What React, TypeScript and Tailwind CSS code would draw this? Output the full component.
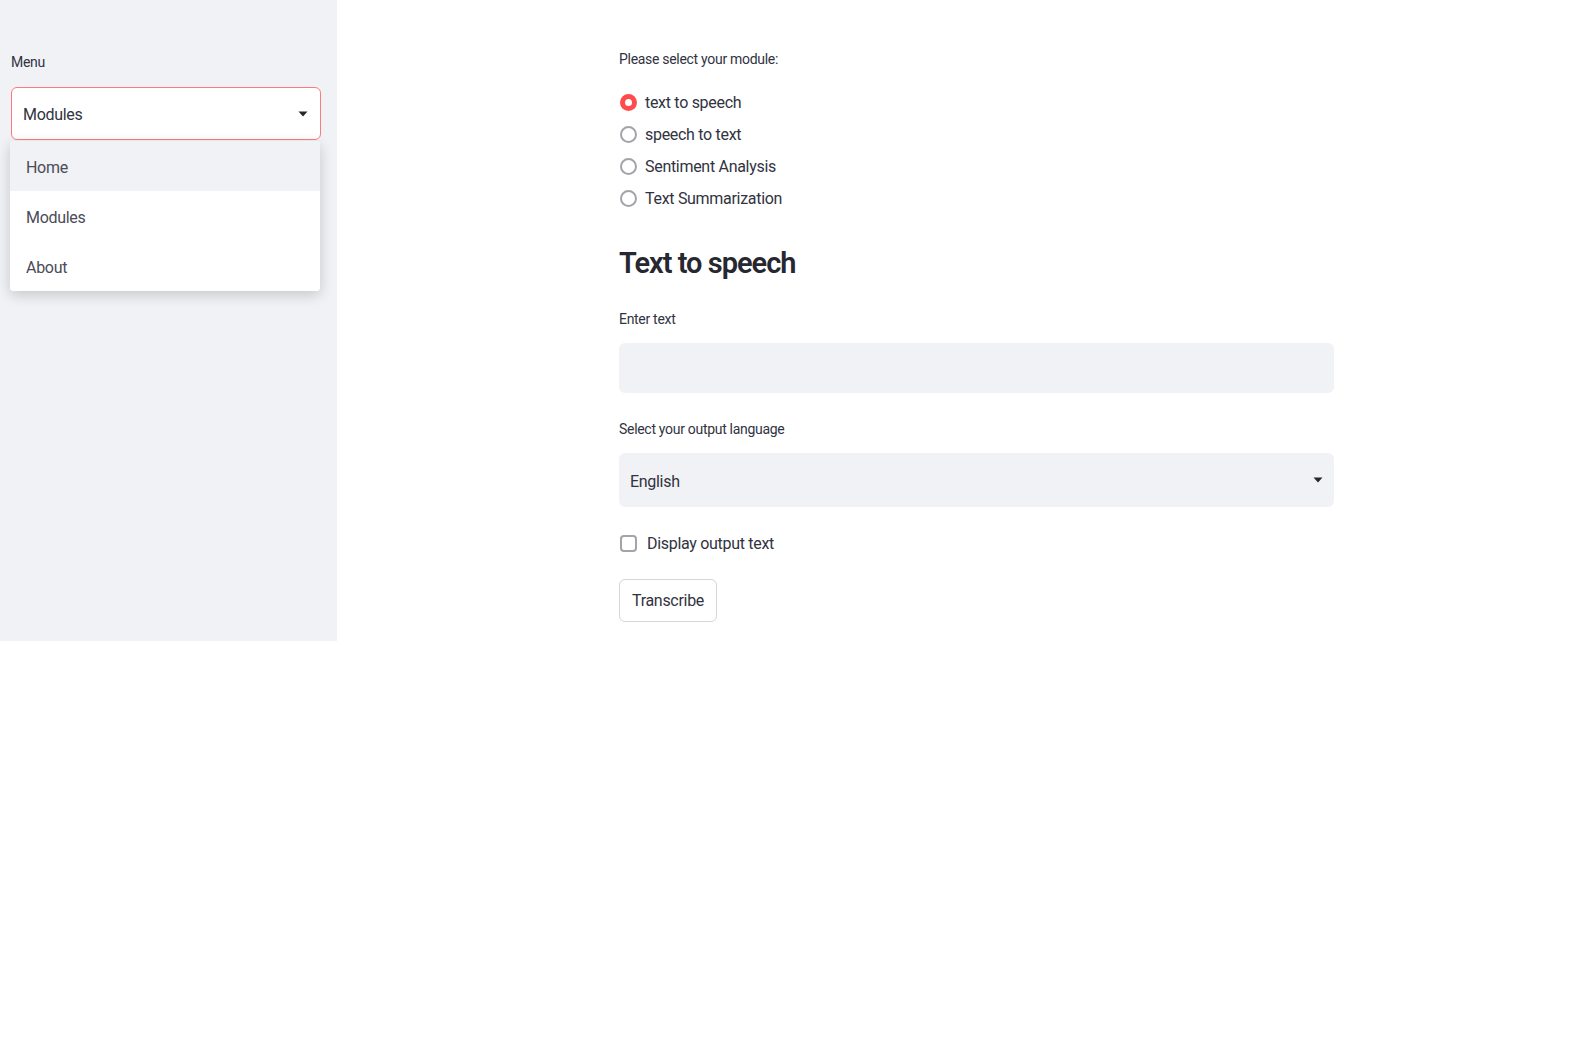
import { useState } from 'react';

const MODULES = ['text to speech', 'speech to text', 'Sentiment Analysis', 'Text Summarization'];
const MENU = ['Home', 'Modules', 'About'];

function Caret() {
  return (
    <svg width="10" height="6" viewBox="0 0 10 6" className="text-[#262730]">
      <path d="M0.5 0.5 L9.5 0.5 L5 5.5 Z" fill="currentColor" />
    </svg>
  );
}

export default function App() {
  const [module, setModule] = useState(0);
  const [showText, setShowText] = useState(false);

  return (
    <div className="w-[1587px] h-[1044px] bg-white flex items-start text-[#31333f] font-['Roboto',_'Liberation_Sans',_sans-serif]">
      {/* Sidebar */}
      <aside className="relative w-[337px] h-[641px] shrink-0 bg-[#f0f2f6] pl-[11px] pr-[16px] pt-[52px]">
        <label className="block text-[14px] leading-[20px] tracking-[-0.3px] text-[#31333f]">Menu</label>
        <div className="mt-[15px] h-[53px] bg-white border border-[#ff7b7b] rounded-[6px] flex items-center justify-between pl-[11px] pr-[12px]">
          <span className="text-[16px] tracking-[-0.3px] pt-[2px]">Modules</span>
          <Caret />
        </div>
        {/* open menu */}
        <ul className="absolute left-[10px] top-[141px] w-[310px] bg-white rounded-[4px] shadow-[0_4px_14px_rgba(0,0,0,0.18)] overflow-hidden">
          {MENU.map((item, i) => (
            <li
              key={item}
              className={`h-[50px] flex items-center pl-[16px] pt-[3px] text-[16px] tracking-[-0.3px] text-[#4a4c57] ${i === 0 ? 'bg-[#f0f2f6]' : 'bg-white'}`}
            >
              {item}
            </li>
          ))}
        </ul>
      </aside>

      {/* Main */}
      <main className="pl-[282px] pt-[49px] w-[1000px]">
        <div className="w-[715px]">
          <p className="text-[14px] leading-[20px] tracking-[-0.3px]">Please select your module:</p>

          <div className="mt-[17px] flex flex-col">
            {MODULES.map((m, i) => (
              <button
                key={m}
                onClick={() => setModule(i)}
                className="h-[32px] flex items-center gap-[8px] text-left"
              >
                {i === module ? (
                  <span className="ml-[1px] w-[17px] h-[17px] rounded-full bg-[#ff4b4b] flex items-center justify-center">
                    <span className="w-[7px] h-[7px] rounded-full bg-white" />
                  </span>
                ) : (
                  <span className="ml-[1px] w-[17px] h-[17px] rounded-full border-2 border-[#a3a4a9] bg-white" />
                )}
                <span className="text-[16px] leading-[24px] tracking-[-0.3px] pt-[1px]">{m}</span>
              </button>
            ))}
          </div>

          <h1 className="mt-[29px] text-[29px] leading-[40px] font-semibold text-[#262730] tracking-[-1px]">
            Text to speech
          </h1>

          <p className="mt-[26px] text-[14px] leading-[20px] tracking-[-0.3px]">Enter text</p>
          <input className="mt-[14px] w-full h-[50px] bg-[#f0f2f6] rounded-[6px] px-[11px] text-[16px] outline-none" />

          <p className="mt-[26px] text-[14px] leading-[20px] tracking-[-0.3px]">Select your output language</p>
          <div className="mt-[14px] h-[54px] bg-[#f0f2f6] rounded-[6px] flex items-center justify-between pl-[11px] pr-[11px]">
            <span className="text-[16px] tracking-[-0.3px] pt-[3px]">English</span>
            <Caret />
          </div>

          <button
            onClick={() => setShowText(!showText)}
            className="mt-[24px] h-[24px] flex items-center gap-[10px]"
          >
            <span
              className={`ml-[1px] w-[17px] h-[17px] rounded-[4px] border-2 ${showText ? 'bg-[#ff4b4b] border-[#ff4b4b]' : 'bg-white border-[#a3a4a9]'}`}
            />
            <span className="text-[16px] tracking-[-0.3px] pt-[1px]">Display output text</span>
          </button>

          <button className="mt-[24px] block w-[98px] h-[43px] bg-white border border-[#d6d6d9] rounded-[6px] text-[16px] tracking-[-0.3px]">
            Transcribe
          </button>
        </div>
      </main>
    </div>
  );
}
